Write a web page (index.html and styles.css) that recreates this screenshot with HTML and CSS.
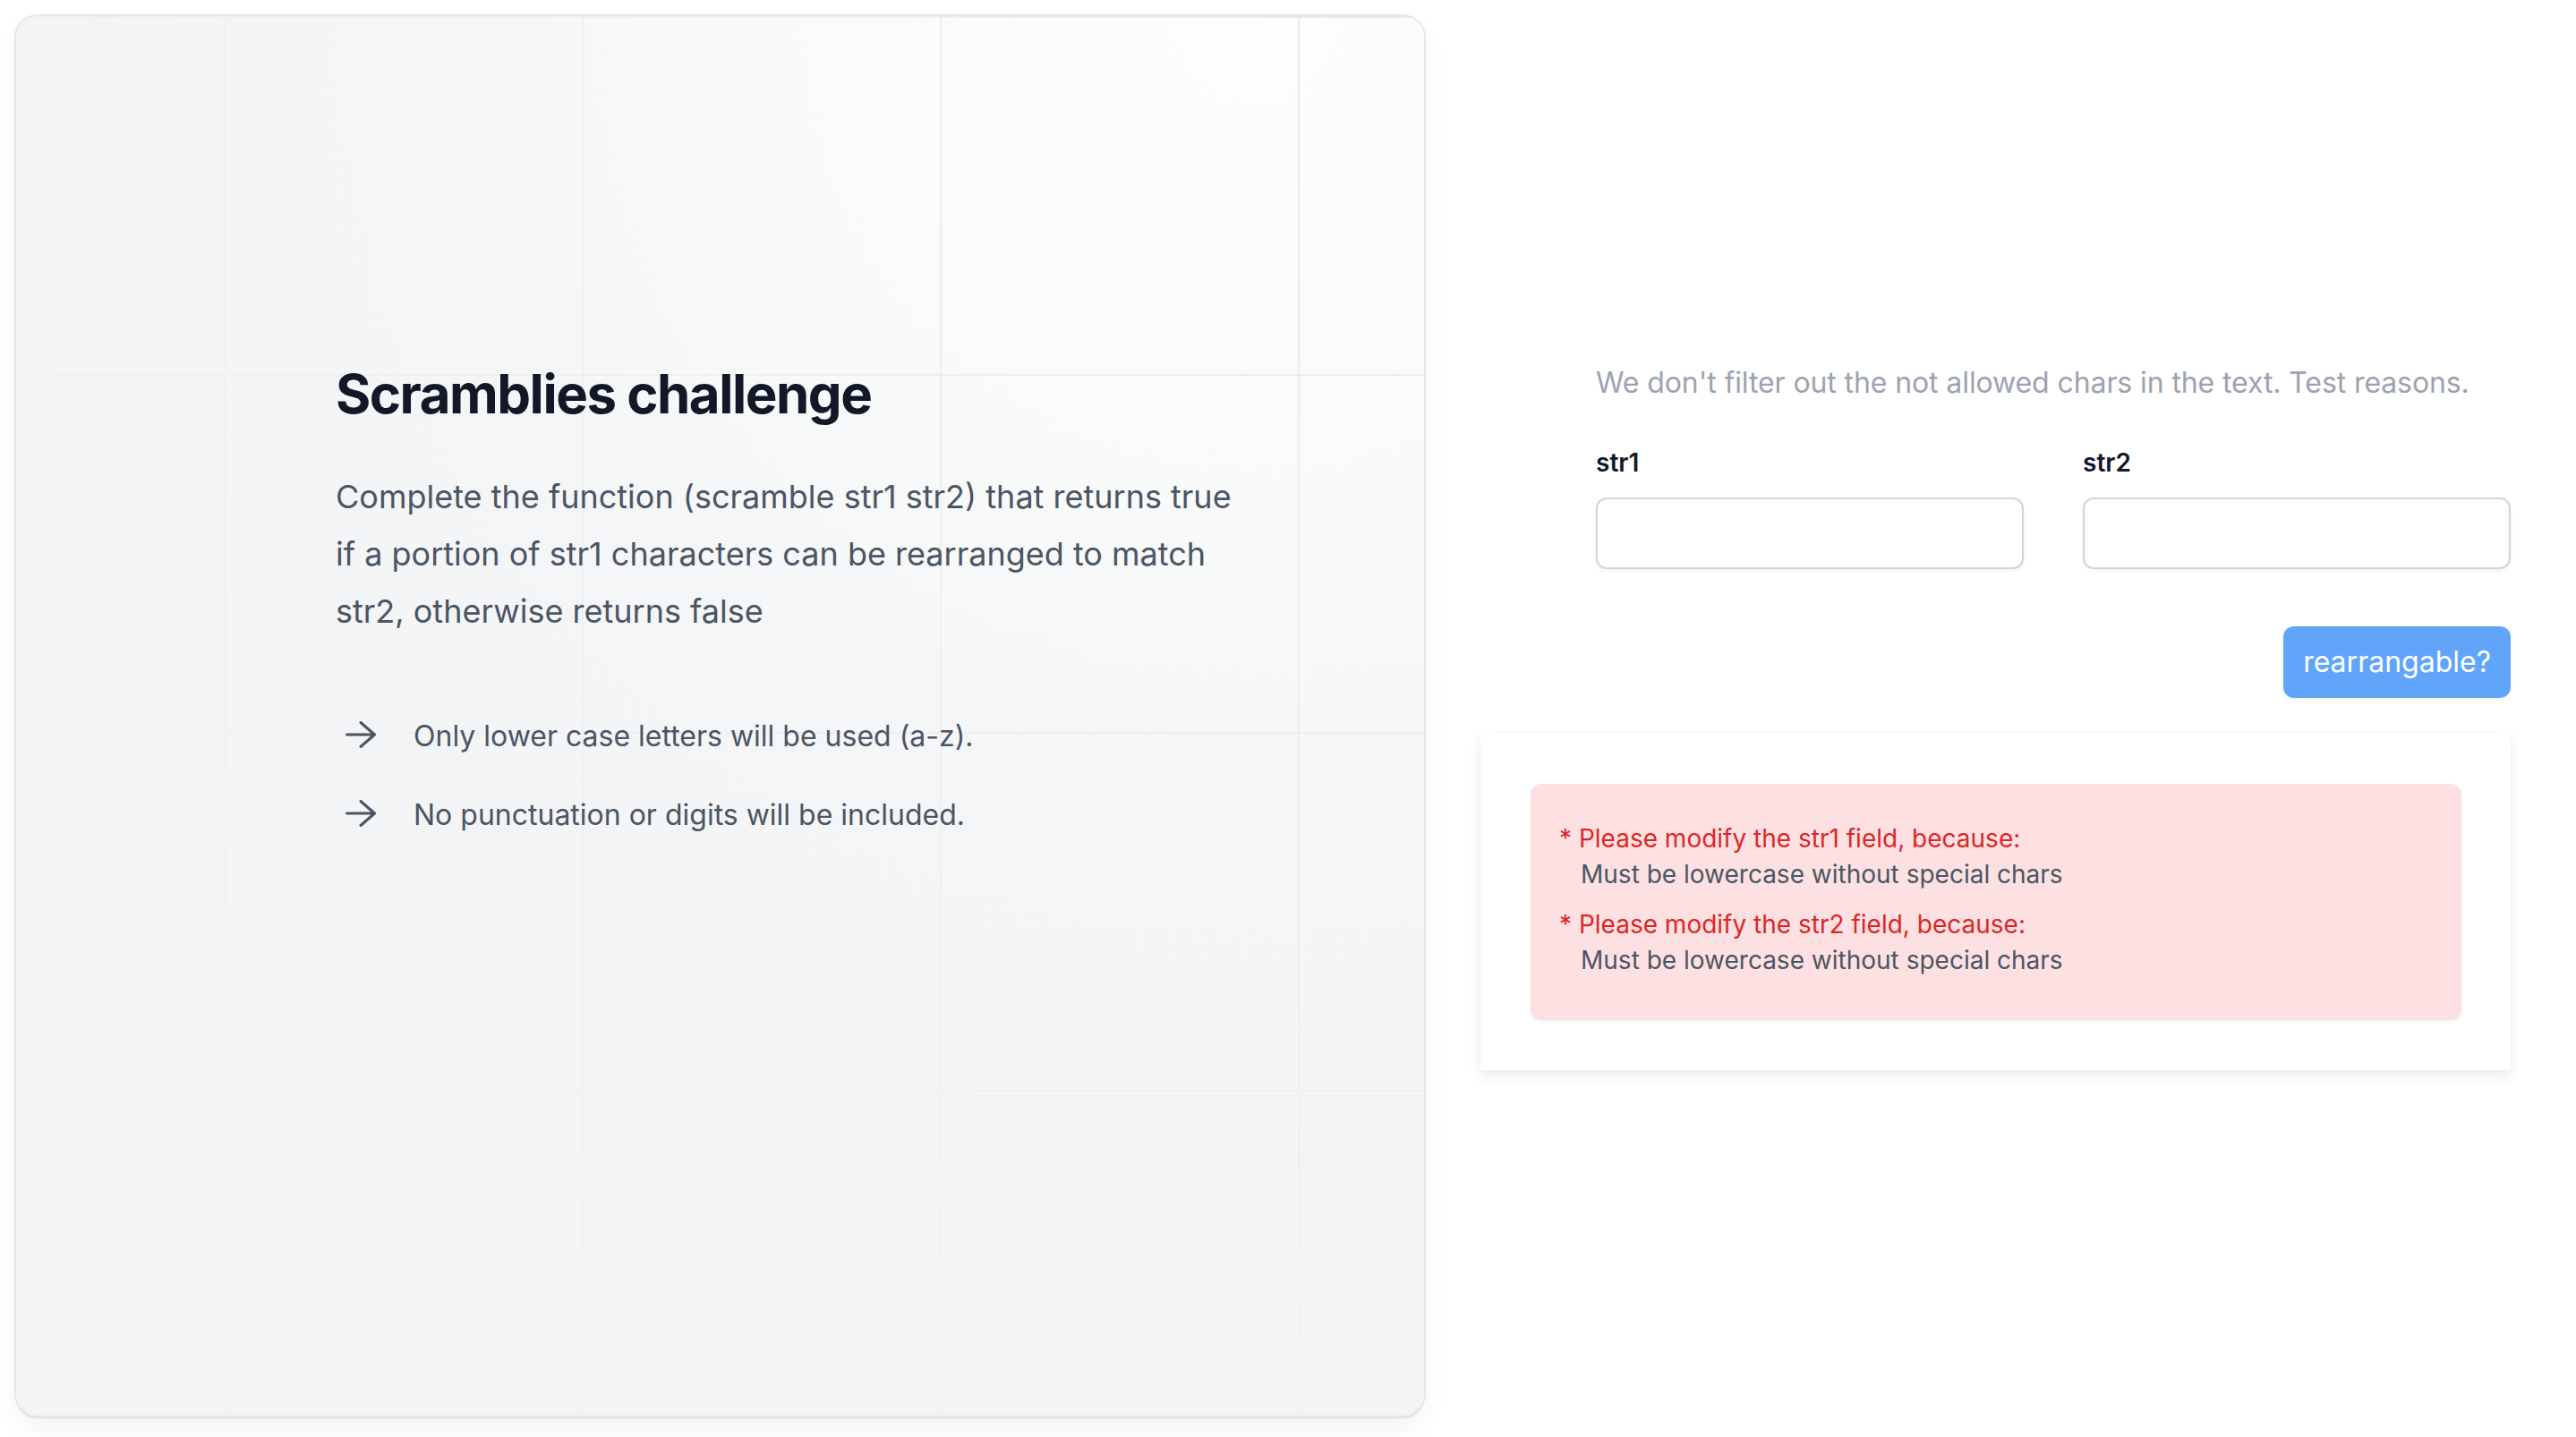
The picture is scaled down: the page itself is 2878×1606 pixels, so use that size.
FILE: index.html
```html
<!DOCTYPE html>
<html lang="en">
<head>
<meta charset="utf-8">
<title>Scramblies challenge</title>
<link rel="stylesheet" href="styles.css">
</head>
<body>
<main class="page">
  <section class="hero">
    <div class="hero-content">
      <h1 class="title">Scramblies challenge</h1>
      <p class="lead">Complete the function (scramble str1 str2) that returns true if a portion of str1 characters can be rearranged to match str2, otherwise returns false</p>
      <ul class="rules">
        <li class="rule">
          <svg class="arrow" viewBox="0 0 34 30" fill="none" stroke="currentColor" stroke-width="3" stroke-linecap="round" stroke-linejoin="round"><path d="M1.5 15H32.5M17 1.5L32.5 15L17 28.5"/></svg>
          <span>Only lower case letters will be used (a-z).</span>
        </li>
        <li class="rule">
          <svg class="arrow" viewBox="0 0 34 30" fill="none" stroke="currentColor" stroke-width="3" stroke-linecap="round" stroke-linejoin="round"><path d="M1.5 15H32.5M17 1.5L32.5 15L17 28.5"/></svg>
          <span>No punctuation or digits will be included.</span>
        </li>
      </ul>
    </div>
  </section>

  <section class="side">
    <form class="form">
      <p class="hint">We don't filter out the not allowed chars in the text. Test reasons.</p>
      <div class="fields">
        <div class="field">
          <label class="label" for="str1">str1</label>
          <input class="input" id="str1" type="text">
        </div>
        <div class="field">
          <label class="label" for="str2">str2</label>
          <input class="input" id="str2" type="text">
        </div>
      </div>
      <div class="actions">
        <button class="btn" type="button">rearrangable?</button>
      </div>
    </form>
    <div class="result-card">
      <div class="errors">
        <div class="error">
          <p class="error-title">* Please modify the str1 field, because:</p>
          <p class="error-reason">Must be lowercase without special chars</p>
        </div>
        <div class="error">
          <p class="error-title">* Please modify the str2 field, because:</p>
          <p class="error-reason">Must be lowercase without special chars</p>
        </div>
      </div>
    </div>
  </section>
</main>
</body>
</html>
```

FILE: styles.css
```css
html, body {
  margin: 0;
  padding: 0;
  background: #ffffff;
  overflow: hidden;
}

body {
  font-family: Inter, "Noto Sans", "Liberation Sans", sans-serif;
  color: #111827;
}

.page {
  box-sizing: border-box;
  height: 1606px;
  display: flex;
  gap: 63px;
  padding: 18px 73px 24px 18px;
}

/* Left hero card */
.hero {
  position: relative;
  flex: none;
  width: 1573px;
  border-radius: 24px;
  overflow: hidden;
  background: radial-gradient(circle at 88% 0%, #fdfdfd 0px, #f9fafa 520px, #f5f6f7 900px, #f3f4f6 1300px);
  box-shadow: 0 0 0 2px #e6e7ea, 0 3px 2px rgba(0, 0, 0, 0.12), 0 14px 30px rgba(0, 0, 0, 0.05);
}

.hero::before {
  content: "";
  position: absolute;
  inset: 0;
  background-image:
    linear-gradient(to right, #e5e7eb 2px, transparent 2px),
    linear-gradient(to bottom, #e5e7eb 2px, transparent 2px);
  background-size: 400px 400px;
  background-position: 232px 0;
  -webkit-mask-image: radial-gradient(ellipse 110% 110% at 100% 0%, #000 0%, rgba(0, 0, 0, 0.55) 45%, rgba(0, 0, 0, 0.12) 100%);
  mask-image: radial-gradient(ellipse 110% 110% at 100% 0%, #000 0%, rgba(0, 0, 0, 0.55) 45%, rgba(0, 0, 0, 0.12) 100%);
}

.hero-content {
  position: relative;
  padding: 386px 0 0 357px;
}

.title {
  margin: 0;
  font-size: 60px;
  line-height: 72px;
  font-weight: 700;
  letter-spacing: -1.5px;
  color: #111827;
}

.lead {
  margin: 47px 0 0;
  max-width: 1024px;
  font-size: 36px;
  line-height: 64px;
  color: #4b5563;
}

.rules {
  list-style: none;
  margin: 80px 0 0;
  padding: 0;
  display: flex;
  flex-direction: column;
  gap: 32px;
}

.rule {
  display: flex;
  align-items: center;
  font-size: 32px;
  line-height: 56px;
  color: #4b5563;
}

.arrow {
  flex: none;
  width: 34px;
  height: 30px;
  margin: -4px 42px 0 11px;
  color: #4b5563;
}

/* Right side */
.side {
  flex: 1;
  display: flex;
  flex-direction: column;
  justify-content: center;
}

.form {
  width: 1022px;
  margin: 0 0 0 auto;
}

.hint {
  margin: 0;
  font-size: 32px;
  line-height: 48px;
  color: #9ca3af;
  letter-spacing: -0.1px;
}

.fields {
  display: grid;
  grid-template-columns: 1fr 1fr;
  column-gap: 66px;
  margin-top: 41px;
}

.label {
  display: block;
  font-size: 28px;
  line-height: 48px;
  font-weight: 600;
  color: #111827;
}

.input {
  display: block;
  box-sizing: border-box;
  width: 100%;
  height: 80px;
  margin-top: 15px;
  padding: 0 24px;
  border: 2px solid #d1d5db;
  border-radius: 12px;
  background: #ffffff;
  box-shadow: 0 2px 4px rgba(0, 0, 0, 0.05);
  font-family: inherit;
  font-size: 32px;
  outline: none;
}

.actions {
  display: flex;
  justify-content: flex-end;
  margin-top: 64px;
}

.btn {
  height: 80px;
  padding: 0 22px;
  border: 0;
  border-radius: 12px;
  background: #60a5fa;
  color: #ffffff;
  font-family: inherit;
  font-size: 32px;
  line-height: 48px;
  font-weight: 400;
  box-shadow: 0 2px 4px rgba(0, 0, 0, 0.05);
}

.result-card {
  margin-top: 40px;
  padding: 56px 55px 56px 56px;
  background: #ffffff;
  box-shadow: 0 0 3px rgba(0, 0, 0, 0.04), 0 6px 14px rgba(0, 0, 0, 0.08);
}

.errors {
  display: flex;
  flex-direction: column;
  gap: 16px;
  padding: 41px 32px 47px;
  border-radius: 12px;
  background: #fde1e2;
  box-shadow: 0 2px 4px rgba(0, 0, 0, 0.06);
}

.error-title,
.error-reason {
  margin: 0;
  font-size: 28px;
  line-height: 40px;
}

.error-title {
  color: #dc2626;
}

.error-reason {
  padding-left: 24px;
  color: #4b5563;
}
```
